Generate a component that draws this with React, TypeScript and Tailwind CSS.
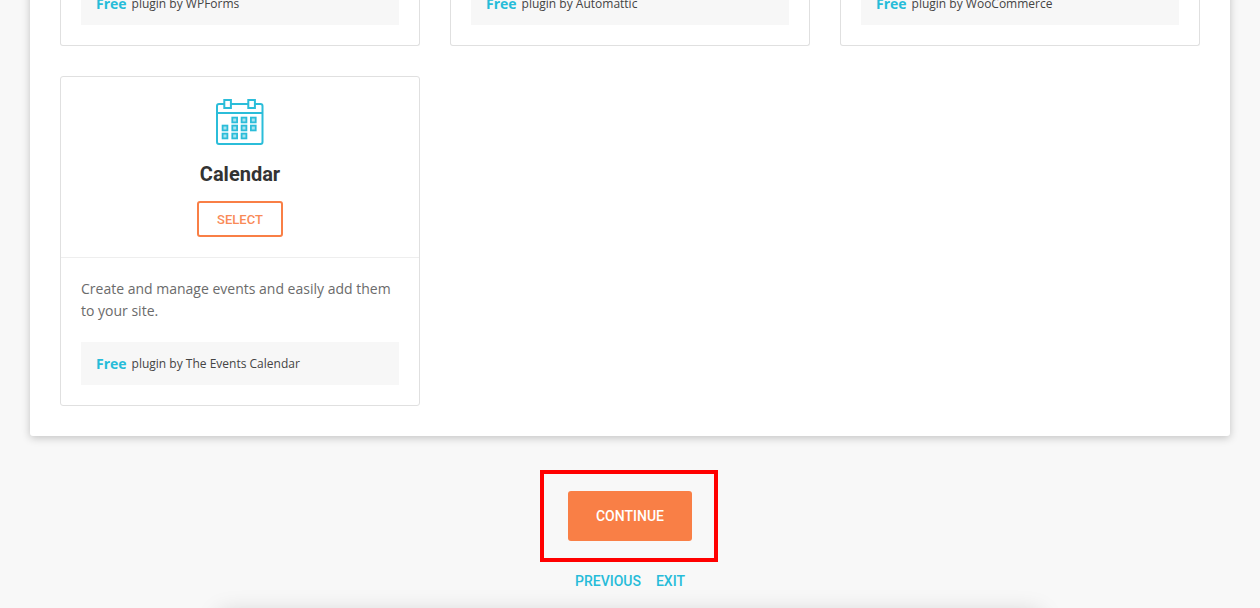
const topCards = ["WPForms", "Automattic", "WooCommerce"];

function PluginNote({ by }: { by: string }) {
  return (
    <div className="flex h-[43px] items-center bg-[#f7f7f7] px-[15px] font-['Open_Sans',sans-serif]">
      <span className="mr-[5px] text-[14px] font-bold text-[#27bcd9]">Free</span>
      <span className="text-[12px] text-[#444444]">plugin by {by}</span>
    </div>
  );
}

function CalendarIcon() {
  return (
    <svg width="48" height="48" viewBox="0 0 48 48" fill="none" stroke="#2bbdd9" strokeWidth="2">
      <rect x="1" y="6" width="45.5" height="40" rx="2" />
      <path d="M1 15h45.5" />
      <rect x="8.3" y="2" width="6.6" height="8" fill="#fff" />
      <rect x="32.3" y="2" width="6.6" height="8" fill="#fff" />
      {[
        [18.7, 22], [28, 22], [37.3, 22],
        [9, 30], [18.7, 30], [28, 30], [37.3, 30],
        [9, 38], [18.7, 38], [28, 38],
      ].map(([cx, cy]) => (
        <rect key={`${cx}-${cy}`} x={cx - 2.4} y={cy - 2.4} width="4.8" height="4.8" fill="#a8e3ef" strokeWidth="1.8" />
      ))}
    </svg>
  );
}

export default function App() {
  return (
    <div className="h-[608px] overflow-hidden bg-[#f8f8f8]">
      <div className="mx-auto -mt-[18px] w-[1200px] rounded-b-[3px] bg-white px-[30px] pb-[30px] shadow-[0_2px_8px_rgba(0,0,0,0.22)]">
        <div className="grid grid-cols-3 gap-[30px]">
          {topCards.map((by) => (
            <div key={by} className="rounded-b-[3px] border-x border-b border-[#e0e0e0] px-5 pb-5">
              <PluginNote by={by} />
            </div>
          ))}

          <div className="rounded-[3px] border border-[#e0e0e0]">
            <div className="flex h-[181px] flex-col items-center border-b border-[#eeeeee] pt-[21px]">
              <CalendarIcon />
              <h3 className="mt-[15px] font-['Roboto',sans-serif] text-[20px] leading-[26px] font-bold text-[#333333]">Calendar</h3>
              <button className="mt-[14px] h-9 w-[86px] rounded-[3px] border-2 border-[#f97f46] pt-px font-['Roboto',sans-serif] text-[13px] font-medium text-[#f98a57]">
                SELECT
              </button>
            </div>
            <div className="p-5">
              <p className="font-['Open_Sans',sans-serif] text-[14px] leading-[22px] text-[#6b6b6b]">
                Create and manage events and easily add them to your site.
              </p>
              <div className="mt-[20px]">
                <PluginNote by="The Events Calendar" />
              </div>
            </div>
          </div>
        </div>
      </div>

      <div className="mt-[34px] ml-[540px] flex h-[92px] w-[178px] items-center justify-center border-4 border-[#ff0000] pl-[2px]">
        <button className="h-[50px] w-[124px] rounded-[3px] bg-[#f97f46] font-['Roboto',sans-serif] text-[14px] font-medium text-white">
          CONTINUE
        </button>
      </div>

      <div className="mt-[10px] flex justify-center gap-[15px] font-['Roboto',sans-serif] text-[14px] leading-[18px] font-medium text-[#27bcd9]">
        <a>PREVIOUS</a>
        <a>EXIT</a>
      </div>

      <div className="mx-auto mt-[24px] h-10 w-[820px] bg-[#f8f8f8] shadow-[0_0_24px_rgba(0,0,0,0.18)]" />
    </div>
  );
}
